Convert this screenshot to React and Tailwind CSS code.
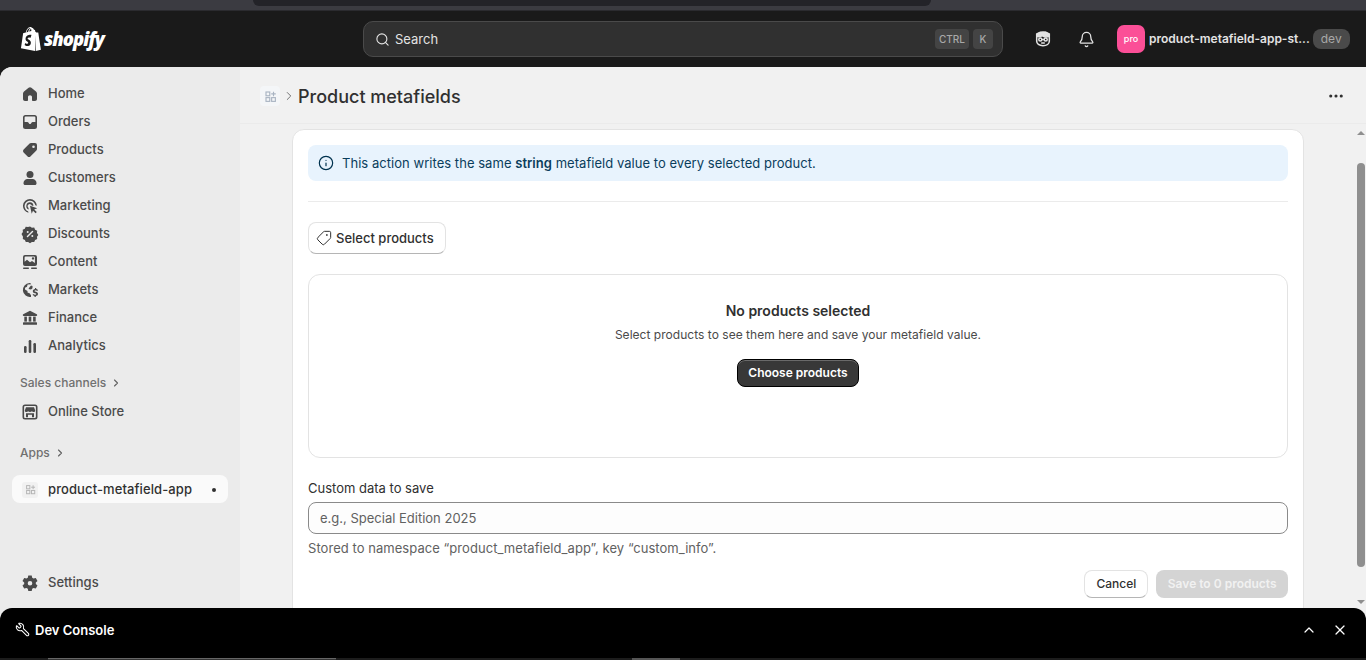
import { Search, ChevronRight, ChevronUp, X, Bell, Wrench, Info, Tag, MoreHorizontal } from "lucide-react";

const font = { fontFamily: "Inter, 'Noto Sans', sans-serif" };

function Icon({ children }) {
  return (
    <svg viewBox="0 0 20 20" className="w-[20px] h-[20px] shrink-0 text-[#4a4a4a]" fill="currentColor">
      {children}
    </svg>
  );
}

const navIcons = {
  Home: <path d="M10 3.2c-.5 0-1 .2-1.4.5L4 7.4c-.6.5-1 1.2-1 2V15c0 1.1.9 2 2 2h2.2c.5 0 .8-.4.8-.8V13c0-1 .9-1.8 2-1.8s2 .8 2 1.8v3.2c0 .4.3.8.8.8H15c1.1 0 2-.9 2-2V9.4c0-.8-.4-1.5-1-2l-4.6-3.7c-.4-.3-.9-.5-1.4-.5z" />,
  Orders: <path fillRule="evenodd" d="M5.5 3A2.5 2.5 0 0 0 3 5.5v9A2.5 2.5 0 0 0 5.500 17h9a2.500 2.500 0 0 0 2.500-2.500v-9A2.500 2.500 0 0 0 14.500 3h-9zm0 1.600h9c.5 0 .9.4.9.9V10h-2.600c-.7 0-1.200.4-1.500 1l-.3.600c-.1.200-.3.300-.5.300H9.500c-.2 0-.4-.100-.500-.300l-.300-.600c-.3-.600-.800-1-1.500-1H4.600V5.500c0-.5.400-.9.900-.9z" />,
  Products: <path fillRule="evenodd" d="M11 3h4a2 2 0 0 1 2 2v4c0 .5-.2 1-.6 1.400l-6 6a2 2 0 0 1-2.800 0l-4-4a2 2 0 0 1 0-2.800l6-6C10 3.200 10.500 3 11 3zm2.500 5a1.300 1.300 0 1 0 0-2.600 1.300 1.300 0 0 0 0 2.600z" />,
  Customers: <><circle cx="10" cy="6.500" r="3.500" /><path d="M3.500 15c0-2.200 1.800-4 4-4h5c2.200 0 4 1.800 4 4v.500c0 .8-.7 1.500-1.500 1.500H5c-.8 0-1.500-.7-1.500-1.500V15z" /></>,
  Marketing: <><path fillRule="evenodd" d="M10 3a7 7 0 0 0-1.500 13.840l-.4-1.600A5.400 5.400 0 1 1 15.300 9.200l1.600.5A7 7 0 0 0 10 3z" /><path d="M10 6.300a3.700 3.700 0 0 0-1.200 7.200l-.4-1.700a2.100 2.100 0 1 1 3.300-2.200l1.700.4A3.700 3.700 0 0 0 10 6.300z" /><path d="M10 9.800l7.200 2.400-3 1.300 2.600 2.600-1.200 1.200-2.600-2.600-1.300 3z" /></>,
  Discounts: <><path fillRule="evenodd" d="M10 2.500l1.900 1.300 2.300-.2.900 2.100 2.100 1-.2 2.300 1.300 1.900-1.300 1.900.2 2.300-2.100.9-.9 2.100-2.300-.2-1.900 1.300-1.900-1.300-2.300.2-.9-2.100-2.100-.9.200-2.300L1.500 10l1.400-1.900-.2-2.300 2.100-1 .9-2.100 2.300.2z" /><path d="M7.500 12.500l5-5" stroke="#ebebeb" strokeWidth="1.500" strokeLinecap="round" /><circle cx="7.700" cy="8" r="1" fill="#ebebeb" /><circle cx="12.300" cy="12" r="1" fill="#ebebeb" /></>,
  Content: <><path fillRule="evenodd" d="M5 3h10a2 2 0 0 1 2 2v7a2 2 0 0 1-2 2H5a2 2 0 0 1-2-2V5a2 2 0 0 1 2-2zm.5 1.600c-.5 0-.9.4-.9.9v4.300l2.400-2 3 2.500 2-1.300 2.900 2V5.500c0-.5-.4-.9-.900-.9H5.500zm7.500 3a1.200 1.200 0 1 0 0-2.400 1.200 1.200 0 0 0 0 2.400z" /><rect x="3" y="15.500" width="6" height="1.500" rx=".7" /><rect x="11" y="15.500" width="6" height="1.500" rx=".7" /></>,
  Markets: <><path d="M9.500 3a7 7 0 1 0 1.500 13.900v-1.800c-.4-.5-.9-1-1.100-1.700l-2.400-1V11l-2.500-1.400L5 7.800l2-1 .6-2.200 3.600-.3C11 3.600 10.300 3 9.500 3zM11 5.500l-1.500 1.700L8.500 9l2.500.5 1.500-1.200V6z" /><path d="M15 8v1.100c-1.200.2-2.200 1-2.200 2.100 0 1.200 1 1.800 2.200 2.100 1 .2 1.200.5 1.200.8 0 .4-.5.700-1.200.7-.6 0-1.200-.3-1.500-.8l-1 .7c.4.700 1.200 1.100 2 1.300V17h1.300v-1c1.200-.2 2.200-1 2.200-2.100 0-1.300-1-1.900-2.200-2.200-1-.2-1.200-.4-1.200-.7 0-.4.400-.7 1.100-.7.5 0 1 .2 1.400.7l.9-.8c-.4-.600-1.100-1-1.800-1.100V8z" /></>,
  Finance: <><path d="M10 2.800L3.200 6.200c-.7.400-.4 1.800.4 1.800h12.800c.8 0 1.100-1.400.4-1.800z" /><rect x="4.300" y="8.600" width="2.600" height="5" /><rect x="8.700" y="8.600" width="2.600" height="5" /><rect x="13.100" y="8.600" width="2.600" height="5" /><rect x="3" y="14.300" width="14" height="2.500" rx=".6" /></>,
  Analytics: <><rect x="4" y="10" width="2.600" height="7" rx="1.200" /><rect x="8.700" y="4" width="2.600" height="13" rx="1.200" /><rect x="13.400" y="7" width="2.600" height="10" rx="1.200" /></>,
  "Online Store": (
    <>
      <path fillRule="evenodd" d="M5 2.500h10A2.500 2.500 0 0 1 17.500 5v10a2.500 2.500 0 0 1-2.500 2.500H5A2.500 2.500 0 0 1 2.500 15V5A2.500 2.500 0 0 1 5 2.500zm0 1.600c-.5 0-.9.4-.9.9v10c0 .5.4.9.9.9h10c.5 0 .9-.4.900-.9V5c0-.5-.4-.9-.9-.9H5z" />
      <path d="M6 5.200h8l1.200 3.200c0 1-.8 1.700-1.700 1.700-.7 0-1.200-.3-1.600-.8-.5.500-1.100.8-1.900.8s-1.400-.3-1.900-.8c-.4.500-.9.800-1.600.8-.9 0-1.700-.7-1.700-1.700z" />
      <path d="M6 11.200h8v4H12v-2.400H8v2.400H6z" />
    </>
  ),
  Settings: <path fillRule="evenodd" d="M8.300 2.500h3.400l.5 2.300 1.300.8 2.300-.7 1.700 3-1.700 1.600v1.500l1.700 1.600-1.700 3-2.300-.7-1.300.8-.5 2.300H8.300l-.5-2.300-1.300-.8-2.300.7-1.700-3L4.200 11V9.500L2.500 7.900l1.700-3 2.300.7 1.300-.8zM10 12.500a2.300 2.300 0 1 0 0-4.600 2.300 2.300 0 0 0 0 4.600z" />,
};

function NavItem({ label }) {
  return (
    <div className="flex items-center h-[28px] pl-[20px] gap-[8px] text-[13px] font-medium text-[#4a4a4a]">
      <Icon>{navIcons[label]}</Icon>
      <span>{label}</span>
    </div>
  );
}

function AppGlyph({ className }) {
  return (
    <svg viewBox="0 0 20 20" className={className} fill="none" stroke="currentColor" strokeWidth="1.500">
      <rect x="4" y="4" width="5" height="5" />
      <rect x="4" y="11.500" width="5" height="5" />
      <rect x="11.500" y="11.500" width="5" height="5" />
      <path d="M14 3.500v6M11 6.500h6" />
    </svg>
  );
}

function Sidebar() {
  const main = ["Home", "Orders", "Products", "Customers", "Marketing", "Discounts", "Content", "Markets", "Finance", "Analytics"];
  return (
    <aside className="w-[240px] shrink-0 bg-[#ebebeb] pt-[13px] flex flex-col">
      {main.map((label) => (
        <NavItem key={label} label={label} />
      ))}
      <div className="flex items-center gap-[4px] pl-[20px] mt-[9px] mb-[1px] h-[28px] text-[12px] font-medium text-[#707070]">
        Sales channels <ChevronRight size={12} strokeWidth={2.200} className="text-[#616161]" />
      </div>
      <NavItem label="Online Store" />
      <div className="flex items-center gap-[4px] pl-[20px] mt-[13px] h-[28px] text-[12px] font-medium text-[#707070]">
        Apps <ChevronRight size={12} strokeWidth={2.200} className="text-[#616161]" />
      </div>
      <div className="mx-[12px] mt-[8px] h-[28px] pt-[1px] rounded-[8px] bg-[#fafafa] flex items-center pl-[10px] pr-[12px] gap-[10px] text-[13px] tracking-[0.1px] font-medium text-[#303030]">
        <span className="w-[16px] h-[16px] rounded-[3px] bg-[#f1f1f1] flex items-center justify-center text-[#b5b5b5]">
          <AppGlyph className="w-[13px] h-[13px]" />
        </span>
        <span className="flex-1">product-metafield-app</span>
        <span className="w-[4px] h-[4px] rounded-full bg-[#303030]" />
      </div>
      <div className="mt-[66px]">
        <NavItem label="Settings" />
      </div>
    </aside>
  );
}

function TopBar() {
  return (
    <header className="h-[56px] shrink-0 bg-[#1a1a1a] flex items-center relative">
      <div className="w-[363px] shrink-0 pl-[20px] flex items-center gap-[3px] text-white">
        <svg viewBox="0 0 22 25" className="w-[21px] h-[24px] shrink-0">
          <path fill="#fff" d="M15.500 2.900l-.7.200C14.400 1.800 13.700.6 12.400.6h-.1C11.900.1 11.500 0 11.100 0 8.100 0 6.600 3.700 6.100 5.600l-2.100.7c-.7.200-.7.200-.8.800L1 22.200 15.800 25V3c-.1-.1-.2-.1-.3-.1zM11.900 4l-2.300.7c.4-1.700 1.300-2.500 2-2.800.2.500.3 1.200.3 2.100zm-1.300-2.900c.1 0 .3 0 .4.100-1 .5-2 1.600-2.400 3.800l-1.800.6C7.300 3.900 8.500 1.100 10.600 1.100zm.5 10.100s-.8-.4-1.700-.4c-1.300.1-1.400.9-1.400 1.100.1 1.200 3.200 1.400 3.400 4.200.1 2.200-1.200 3.700-3 3.800-2.300.1-3.500-1.200-3.500-1.200l.5-2.100s1.300 1 2.300.9c.7 0 .9-.6.900-1-.1-1.500-2.600-1.500-2.800-4-.1-2.200 1.300-4.300 4.400-4.500 1.200-.1 1.800.2 1.800.2z" />
          <path fill="#fff" d="M16.500 25l5.500-1.300s-2.800-17.600-2.800-17.700c0-.1-.1-.2-.2-.2l-1.900-.1-1.400-1.400c-.1 0-.1-.1-.2-.1z" />
        </svg>
        <span className="text-[18.500px] font-extrabold italic tracking-[-1px]" style={{ fontFamily: "'Open Sans', sans-serif" }}>
          shopify
        </span>
      </div>
      <div className="w-[640px] h-[36px] shrink-0 rounded-[10px] bg-[#303030] border border-[#4a4a4a] flex items-center pl-[11px] pr-[9px] text-[#e3e3e3] text-[13px]">
        <Search size={15} strokeWidth={1.800} />
        <span className="ml-[5px] mt-[1px] flex-1">Search</span>
        <span className="h-[20px] px-[4px] rounded-[4px] bg-[#444] text-[#a8a8a8] text-[10px] font-medium flex items-center">CTRL</span>
        <span className="h-[20px] w-[20px] ml-[4px] rounded-[4px] bg-[#444] text-[#a8a8a8] text-[10px] font-medium flex items-center justify-center">K</span>
      </div>
      <svg viewBox="0 0 20 20" className="w-[18px] h-[18px] ml-[31px] text-[#e3e3e3]" fill="none" stroke="currentColor" strokeWidth="1.700">
        <path d="M3 8c0-3.200 2.300-5.500 7-5.500S17 4.800 17 8v4.500c0 2.800-2.700 5-7 5s-7-2.200-7-5z" />
        <path d="M3 7c3 1 4.500.5 6-1 1.500 1.500 5 2 8 1V4.500L13 2.500H7L3 4.500z" fill="currentColor" />
        <circle cx="7" cy="10.500" r="1.700" />
        <circle cx="13" cy="10.500" r="1.700" />
        <path d="M8.700 10.500h2.600M8 14.500h4" />
      </svg>
      <Bell size={17} strokeWidth={1.800} className="ml-[26px] text-[#e3e3e3]" />
      <span className="ml-[22px] w-[28px] h-[28px] rounded-[7px] bg-[#fb4f97] text-white text-[9px] font-medium flex items-center justify-center">pro</span>
      <span className="ml-[4px] text-[12px] font-semibold text-[#e3e3e3] whitespace-nowrap">product-metafield-app-st...</span>
      <span className="ml-[3px] h-[20px] px-[8px] rounded-[8px] bg-[#4a4a4a] text-[#a8a8a8] text-[12px] flex items-center">dev</span>
    </header>
  );
}

function Card() {
  return (
    <section className="w-[1012px] mx-auto bg-white border border-[#e3e3e3] rounded-t-[12px] px-[15px] pt-[15px] pb-[20px]">
      <div className="h-[36px] rounded-[8px] bg-[#e8f3fd] flex items-center pl-[10px] gap-[8px] text-[13px] text-[#0a3d5c]">
        <Info size={16} strokeWidth={1.800} className="text-[#00324f]" />
        <p className="mt-[1px] tracking-[0.04px]">
          This action writes the same <b className="font-semibold">string</b> metafield value to every selected product.
        </p>
      </div>
      <div className="h-px bg-[#ebebeb] mt-[20px]" />
      <button className="mt-[20px] h-[32px] pl-[7px] pr-[11px] flex items-center gap-[4px] rounded-[8px] bg-white border border-[#e3e3e3] border-b-[#b5b5b5] text-[13px] font-medium text-[#303030]">
        <Tag size={16} strokeWidth={1.500} className="-scale-x-100" />
        <span className="mt-[1px]">Select products</span>
      </button>
      <div className="mt-[20px] h-[184px] rounded-[12px] border border-[#e3e3e3] flex flex-col items-center pt-[27px]">
        <h2 className="text-[14px] leading-[18px] font-semibold text-[#303030]">No products selected</h2>
        <p className="mt-[6px] text-[12px] leading-[18px] tracking-[0.03px] text-[#4a4a4a]">Select products to see them here and save your metafield value.</p>
        <button className="mt-[15px] h-[28px] px-[10px] rounded-[8px] bg-[#383838] border border-black text-[12px] font-semibold text-white shadow-[inset_0_1px_0_rgba(255,255,255,0.25)]">
          Choose products
        </button>
      </div>
      <label className="block mt-[21px] text-[13px] leading-[18px] text-[#303030]">Custom data to save</label>
      <div className="mt-[5px] h-[32px] pt-[1px] rounded-[8px] bg-[#fdfdfd] border border-[#8a8a8a] flex items-center pl-[11px] text-[13px] text-[#616161]">
        e.g., Special Edition 2025
      </div>
      <p className="mt-[5px] text-[13px] leading-[18px] tracking-[0.05px] text-[#616161]">Stored to namespace “product_metafield_app”, key “custom_info”.</p>
      <div className="mt-[13px] flex justify-end gap-[8px]">
        <button className="h-[28px] px-[11px] rounded-[8px] bg-white border border-[#e3e3e3] border-b-[#b5b5b5] text-[12px] font-medium text-[#303030]">Cancel</button>
        <button className="h-[28px] px-[11.500px] rounded-[8px] bg-[#d4d4d4] text-[12px] font-semibold text-[#f1f1f1]">Save to 0 products</button>
      </div>
    </section>
  );
}

export default function App() {
  return (
    <div className="h-[660px] w-[1366px] overflow-hidden relative flex flex-col bg-[#1a1a1a]" style={font}>
      {/* browser strip */}
      <div className="h-[11px] shrink-0 bg-[#3b3b41] border-b border-[#2b2b2f]">
        <div className="ml-[253px] w-[678px] h-[6px] rounded-b-[6px] bg-[#232328]" />
      </div>
      <TopBar />
      <div className="flex-1 min-h-0 flex rounded-tl-[12px] overflow-hidden bg-[#f1f1f1]">
        <Sidebar />
        <main className="flex-1 min-w-0 flex flex-col">
          <div className="h-[57px] shrink-0 pt-[2px] border-b border-[#ebebeb] flex items-center pl-[20px] pr-[21px]">
            <span className="w-[20px] h-[20px] rounded-[4px] bg-[#f4f6f8] flex items-center justify-center text-[#a9b4c2]">
              <AppGlyph className="w-[15px] h-[15px]" />
            </span>
            <ChevronRight size={14} strokeWidth={1.500} className="ml-[2px] text-[#616161]" />
            <h1 className="ml-[2px] text-[18px] font-[550] text-[#303030]">Product metafields</h1>
            <MoreHorizontal size={18} strokeWidth={2.200} className="ml-auto text-[#303030]" />
          </div>
          <div className="flex-1 min-h-0 flex pt-[5px]">
            <div className="flex-1 min-w-0 pl-[52px] pr-[52px] overflow-hidden">
              <Card />
            </div>
            {/* scrollbar */}
            <div className="w-[10px] shrink-0 flex flex-col items-center pt-[2px]">
              <span className="border-x-[4px] border-x-transparent border-b-[4px] border-b-[#8f8f8f]" />
              <div className="mt-[28px] w-[8px] h-[404px] rounded-full bg-[#8f8f8f]" />
              <span className="mt-[33px] border-x-[4px] border-x-transparent border-t-[4px] border-t-[#8f8f8f]" />
            </div>
          </div>
        </main>
      </div>
      {/* dev console overlays the page */}
      <div className="absolute left-0 right-0 bottom-0 h-[52px] bg-black rounded-t-[12px] flex items-start pt-[14px] pl-[15px] pr-[18px] text-white">
        <Wrench size={15} strokeWidth={1.700} className="-scale-x-100" />
        <span className="ml-[5px] -mt-[1px] text-[13px] font-semibold">Dev Console</span>
        <ChevronUp size={16} strokeWidth={1.800} className="ml-auto" />
        <X size={16} strokeWidth={1.800} className="ml-[15px]" />
        <div className="absolute left-0 right-0 bottom-0 h-[2px] bg-[#1c1c1c]" />
        <div className="absolute left-[48px] bottom-0 w-[288px] h-[2px] bg-[#333] border-t border-[#666]" />
        <div className="absolute left-[632px] bottom-0 w-[48px] h-[2px] bg-[#555]" />
      </div>
    </div>
  );
}
